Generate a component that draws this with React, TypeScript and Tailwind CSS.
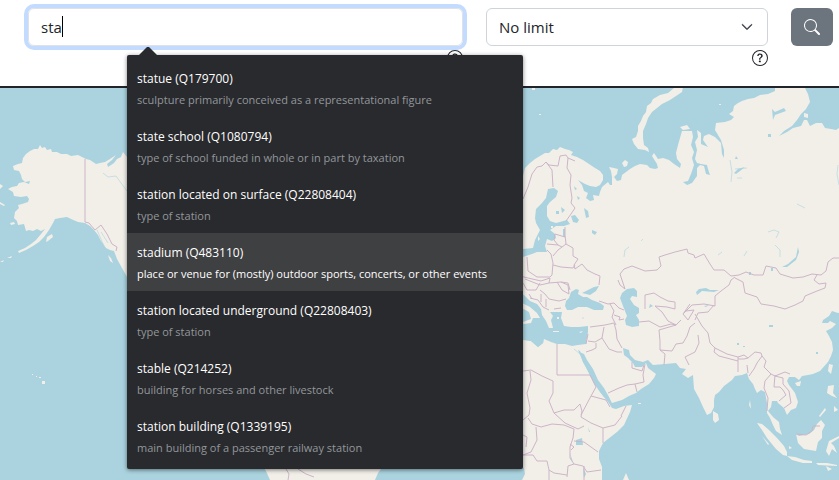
import { useState } from "react";
import { BsChevronDown, BsQuestionCircle, BsSearch } from "react-icons/bs";

type Suggestion = {
  label: string;
  id: string;
  description: string;
};

const suggestions: Suggestion[] = [
  {
    label: "statue",
    id: "Q179700",
    description: "sculpture primarily conceived as a representational figure",
  },
  {
    label: "state school",
    id: "Q1080794",
    description: "type of school funded in whole or in part by taxation",
  },
  {
    label: "station located on surface",
    id: "Q22808404",
    description: "type of station",
  },
  {
    label: "stadium",
    id: "Q483110",
    description:
      "place or venue for (mostly) outdoor sports, concerts, or other events",
  },
  {
    label: "station located underground",
    id: "Q22808403",
    description: "type of station",
  },
  {
    label: "stable",
    id: "Q214252",
    description: "building for horses and other livestock",
  },
  {
    label: "station building",
    id: "Q1339195",
    description: "main building of a passenger railway station",
  },
];

const land = [
  // Alaska and western Canada
  "M127 157L123 152L121 157L117 159L114 163L108 167L107 164L112 160L116 155L110 159L105 162L100 163L96 164L90 160L86 159L82 157L78 155L71 156L67 154L61 154L57 152L52 152L51 149L47 150L45 147L42 148L40 145L38 149L34 149L30 151L26 154L23 158L22 163L18 164L13 166L14 170L19 171L21 175L22 179L25 182L30 181L29 184L24 182L19 183L17 186L12 187L8 189L13 192L14 196L21 197L27 196L29 199L28 202L22 204L18 205L19 208L15 212L14 218L17 221L18 225L24 224L26 231L29 230L33 231L37 229L41 231L45 229L41 234L36 240L31 244L25 248L18 251L19 253L26 250L33 246L39 242L44 237L49 230L53 223L55 219L60 218L67 217L71 219L78 222L85 223L90 226L94 230L98 235L101 241L106 248L110 250L114 251L117 259L122 268L127 277L150 290L150 157Z",
  "M47 237L52 234L53 237L48 241L46 242Z M0 184L3 186L0 189Z M0 202L5 205L4 206L0 204Z M10 223L14 222L15 224L11 225Z M108 255L111 258L113 263L110 261Z M7 258L12 256L11 258Z M0 262L4 260L3 262Z",
  // Hawaii
  "M42 381h3v3h-3Z M36 376h1v1h-1Z M39 377h2v1h-2Z M32 374h1v1h-1Z",
  // South America
  "M262 465L266 471L270 480L375 480L378 473L384 465Z",
  // Novaya Zemlya and small Arctic islands
  "M683 87L674 88L668 93L660 95L653 99L651 103L647 106L646 112L643 116L641 121L638 126L638 131L636 137L632 139L634 144L638 149L645 150L649 152L648 148L644 145L643 138L643 131L646 124L648 118L652 112L657 108L662 104L670 100L676 96L682 92Z",
  "M622 163L625 160L628 162L627 166L624 167Z M532 88h3v2h-3Z M539 114h2v1h-2Z M680 127L687 125L690 129L683 130Z M719 104h2v1h-2Z M804 113L808 114L808 118L804 117Z",
  // Eurasia
  "M515 188L523 176L525 168L530 163L535 159L540 156L545 153L549 153L553 149L557 150L560 147L565 149L569 150L573 152L571 155L577 157L583 160L589 164L595 168L600 171L603 175L603 180L600 185L596 187L590 186L585 184L578 180L582 185L584 191L588 193L586 198L590 201L594 200L593 195L599 196L600 192L602 187L608 182L610 185L612 185L612 177L611 171L609 167L614 168L618 169L617 174L614 177L617 181L621 180L622 175L626 172L630 169L635 166L640 164L647 165L650 168L655 169L658 168L657 164L652 156L654 153L658 159L663 158L669 160L674 164L680 168L681 164L677 159L676 153L678 145L680 138L682 131L692 131L693 137L691 145L694 152L692 158L694 165L691 174L688 181L683 182L687 185L692 183L697 176L697 168L700 165L704 166L706 174L710 175L708 169L707 165L701 164L697 163L695 159L697 150L695 142L698 137L697 130L701 133L701 144L708 147L703 140L704 136L709 134L715 137L721 143L722 154L724 158L724 150L721 140L718 135L715 130L716 123L725 122L731 120L734 117L729 114L733 111L734 106L738 103L742 101L748 99L754 98L760 95L768 94L775 91L775 82L800 82L805 88L808 94L810 102L806 109L801 114L797 120L792 126L784 131L779 136L787 132L793 128L801 126L804 120L807 120L810 126L816 123L822 123L825 128L831 129L836 130L845 124L845 312L838 313L832 311L829 316L823 320L822 323L828 323L830 321L836 324L832 328L826 331L829 336L832 342L833 350L831 356L828 362L820 371L813 374L808 375L802 376L799 380L795 377L789 377L787 381L789 385L795 393L798 402L796 408L791 410L787 415L784 408L778 403L777 401L772 401L771 407L768 411L773 417L779 422L780 429L782 435L776 431L773 425L770 418L767 413L767 403L765 392L761 390L757 393L755 389L753 384L749 379L747 373L742 375L735 376L732 380L724 386L719 392L715 395L714 400L714 407L711 413L707 415L703 407L699 398L694 389L693 375L688 378L682 374L686 369L680 368L676 363L665 364L653 365L648 360L643 362L635 360L630 355L629 350L623 348L624 355L628 358L633 363L635 367L642 367L646 363L648 368L656 374L654 378L649 384L641 389L636 393L629 396L622 400L612 403L609 397L604 388L598 380L593 369L587 360L584 354L575 350L566 346L515 335Z",
  // Africa
  "M515 338L523 340L531 341L538 347L543 343L544 339L551 342L557 344L565 344L572 346L578 345L584 346L585 350L580 352L583 362L590 373L594 383L600 392L607 400L612 408L616 409L624 406L632 405L630 412L624 425L617 432L608 439L603 443L599 451L599 459L602 467L602 480L522 480L525 474L524 468L515 462Z",
  // South and east Asian islands
  "M713 411L718 414L719 420L715 423L713 420Z M757 423L762 424L769 430L777 438L784 446L787 452L787 456L783 455L776 449L767 438L762 430Z M787 456L795 457L804 460L812 461L812 463L803 463L792 460Z M796 434L799 436L809 434L814 430L817 424L821 420L825 425L822 431L822 438L818 442L816 451L804 449L798 443Z M829 364L833 365L831 374L828 371Z M795 383L801 381L800 386L797 386Z M828 386L834 385L833 393L837 398L832 396L827 393Z M829 441L839 436L839 438L831 443L834 446L837 453L832 449L829 456L826 451Z M834 406L838 410L834 412Z M825 408L819 416L820 417L826 410Z M816 463L827 463L837 465L837 466L818 465Z M789 446L792 448L789 449Z M750 400L751 409L749 405Z M762 436L769 444L768 445Z M826 466L832 469L828 471Z",
  "M623 480L626 473L629 480Z M638 403h3v1h-3Z",
];

const water = [
  // Baltic Sea
  "M548 189L554 188L558 191L556 197L550 202L547 206L547 216L550 221L556 223L567 220L570 224L564 226L556 226L550 230L555 234L556 238L552 241L547 239L545 246L547 252L537 252L532 254L523 257L520 254L523 249L533 248L535 240L540 230L536 223L535 218L536 209L542 203L546 198Z",
  // Mediterranean and Adriatic
  "M515 291L524 295L530 301L537 304L541 309L542 315L546 321L549 328L553 328L551 320L553 316L550 312L557 312L562 312L561 318L564 326L571 327L579 327L588 326L588 332L586 344L578 345L572 346L565 344L557 344L551 342L544 339L543 343L538 347L531 341L515 338L515 319L524 324L531 323L533 318L540 318L537 313L530 307L522 303L515 299Z M520 307L529 312L531 319L523 322Z",
  // Black Sea, Caspian and Gulf
  "M565 306L566 301L569 298L571 292L576 289L579 290L578 294L583 297L587 297L592 300L600 303L604 306L603 310L594 310L587 307L578 307L572 310L567 310Z M582 293L588 290L594 287L599 286L596 291L590 295Z",
  "M622 293L627 289L634 288L637 291L637 297L632 296L630 299L634 305L639 308L639 313L636 315L639 320L639 326L632 327L626 325L625 320L627 316L623 306L620 298Z",
  "M578 350L580 351L584 361L589 370L598 382L606 396L610 404L603 396L594 383L583 362Z",
  // Lakes
  "M798 247L796 257L788 264L782 267L787 267L796 260L799 252Z M571 216L575 215L579 220L577 223L573 222Z M584 208L588 211L589 217L586 218Z M576 440L582 438L583 445L576 445Z M696 292L699 289L706 288L710 290L719 290L714 292L702 291L697 295Z M592 230L597 232L595 235L592 233Z M704 306L709 305L706 307Z M772 109L775 112L784 108L786 111L775 115L773 120Z M734 173L738 169L745 167L740 171L736 174Z M563 229h2v8h-2Z M769 325h4v2h-4Z M588 427L590 432L589 432Z M768 134h3v3h-3Z M736 156L738 159L735 159Z M749 272h2v3h-2Z M771 268h2v3h-2Z M583 467L586 474L584 478Z M570 453L573 462L571 459Z M650 304L653 306L649 308Z M737 343h2v2h-2Z M743 346h2v1h-2Z M816 352h2v2h-2Z",
  "M538 212h2v3h-2Z M561 207L565 210L562 213Z M556 211h3v3h-3Z M574 186L577 189L575 190Z M577 196L580 198L578 200Z",
];

// Thin, faint rivers and reservoirs
const rivers =
  "M103 173L108 177L116 176L121 183L127 191 M730 160L732 172L731 182 M735 169L747 168 M737 178L742 178 M768 232L774 230L779 232L776 238 M775 245L780 250L780 257 M797 204L805 208 M624 257L625 250L629 247 M641 241L643 239 M838 165L837 174L839 185 M744 256L747 251 M718 255L722 252 M582 318L584 318 M623 470L625 468 M101 232L108 243 M97 230L104 246 M574 349L580 354";

const borders = [
  "M85 159V222L89 223L95 230L101 225L107 234L112 244L117 247L116 251",
  // Scandinavia and Finland
  "M523 199L528 187L532 174L537 167L542 166L546 162L549 165L558 166L560 156L566 155L568 158L575 161 M546 162L552 170L553 187 M568 158L567 168L571 175L570 185L572 198L571 203L575 208L571 214L566 221",
  // Eastern Europe
  "M565 227L565 235L566 244L562 247L558 245L547 244 M558 245L554 240L555 234L565 237 M566 244L573 248L573 256L578 259L574 265L575 269L582 264L587 270L595 274L600 276L599 285 M547 250L551 254L553 263L552 275L550 277L537 277L528 271L527 257 M553 265L561 267L573 268L575 265 M553 256L558 250L562 247 M520 276L528 278L541 281L550 278L549 283L540 285L525 279 M540 283L536 290L527 290L523 283 M549 283L561 282L568 285L569 294L562 290L557 282 M540 290L545 294L549 299L559 301L566 299 M530 298L538 300L543 307L549 310 M541 294L541 302 M546 299L546 307 M554 309L561 308 M529 294L532 299 M561 282L568 283L570 290",
  // Russia, Kazakhstan, Mongolia, China
  "M618 280L620 285L625 289L620 274L624 269L632 266L645 271L657 270L661 266L659 257L665 255L675 252L687 249L688 253L694 255L695 258L704 254L710 264L714 270L724 270L731 276L739 275L746 272L754 275L763 275L766 266L776 268L780 274L793 278L803 277L812 274L821 275L826 271L828 262L833 258L839 258",
  "M735 278L743 282L745 293L757 297L761 304L774 306L785 309L795 305L803 301L805 296L817 291L825 288L826 283L819 284L814 280L817 275 M735 277L731 280L729 285L721 291L715 296L715 306L704 304L692 305L684 313 M714 305L708 312L698 313L695 320 M695 314L702 326L708 333L710 343 M645 309L645 295L654 293L660 297L668 301L675 302L675 309L667 307L655 306 M639 322L649 321L660 327L671 324L676 325 M655 306L662 312L668 321L676 325L681 320 M690 304L683 314L688 320L694 310L686 311 M695 323L690 327L687 336L683 343 M676 325L659 330L660 341L660 350L665 354L664 365 M660 350L672 351L676 344L683 343",
  "M698 335L699 343L695 352L685 357L689 365 M710 343L715 348L727 354L738 357L738 361L719 356L714 352L715 348 M738 357L744 355L748 358L744 359L738 359 M748 358L755 352L761 353L762 356L757 363L754 369L749 376 M738 361L738 372 M747 365L748 373 M762 356L766 361L764 367L771 374L775 376L785 372L790 374 M771 374L765 381L764 388L768 398L767 411 M775 375L774 387L780 387L783 390L786 395L779 401 M775 376L783 378L783 384L789 391L791 403L784 408 M796 434L806 435L812 431L813 426L820 426",
  // Caucasus and Middle East
  "M599 301L608 304L614 303L619 308L624 310 M610 304L614 311L612 317L616 325 M590 327L605 325L614 323L616 330L617 339L622 348 M614 315L620 317L619 320L624 319 M604 327L602 338L595 342L588 341 M602 338L609 349L617 352L622 352 M596 343L596 348L592 350L586 352 M588 334L586 344 M608 393L619 388L627 385L635 384L644 382L643 375L645 364 M635 384L637 392 M632 362L632 368L642 371L644 365",
  // Africa
  "M557 344V375H590 M523 371L531 370L542 376L553 381V393L549 401L554 413L564 410L574 410L580 404L582 411L581 417L591 423L603 428L615 425L622 416 M530 371L531 380L527 393L530 408L529 415L523 420 M590 375L596 387L591 396L606 400L610 407 M591 396L581 415 M554 413L565 423L578 429L584 426 M603 428L603 443 M621 416L626 406 M528 418L532 424L541 427L552 424L564 425L574 429L573 438L570 447L570 458L574 464L568 466L567 477 M574 441L584 442L598 452 M574 464L583 466L587 472L601 470 M523 455H533L537 461H547L549 470L554 473L567 475 M536 427L537 440L531 452L523 455 M549 470V480 M570 444L574 447L571 450 M584 466L584 480 M523 435L527 437L526 447",
  "M286 469L289 474L288 480 M298 469L306 474L314 477",
];

const WorldMap = () => (
  <svg
    viewBox="0 88 839 392"
    preserveAspectRatio="xMidYMid slice"
    role="img"
    aria-label="World map"
    className="block h-full w-full bg-[#aad3df]"
  >
    <g fill="#f2efe9">
      {land.map((d) => (
        <path key={d} d={d} />
      ))}
    </g>
    <g fill="#aad3df">
      {water.map((d) => (
        <path key={d} d={d} />
      ))}
    </g>
    <path d={rivers} fill="none" stroke="#aad3df" strokeOpacity="0.6" />
    <path
      d="M538 236L540 239L538 241Z M551 226h2v2h-2Z M579 332L583 331L581 333Z M553 331h6v1h-6Z M557 317h2v2h-2Z"
      fill="#f2efe9"
    />
    <g fill="none" stroke="#cdb5c8" strokeLinejoin="round">
      {borders.map((d) => (
        <path key={d} d={d} />
      ))}
    </g>
  </svg>
);

const HelpButton = ({ label }: { label: string }) => (
  <button type="button" aria-label={label} className="mt-1 block text-[#212529]">
    <BsQuestionCircle size={16} />
  </button>
);

type SuggestionListProps = {
  active: string;
  setActive: (id: string) => void;
};

const SuggestionList = ({ active, setActive }: SuggestionListProps) => (
  <div className="absolute top-[39px] left-[99px] z-10 w-[396px]">
    <svg width="18" height="8" className="ml-3 block" aria-hidden="true">
      <path d="M0 8L8 0H10L18 8Z" fill="#292a2d" />
    </svg>
    <div
      id="suggestions"
      role="listbox"
      aria-label="Suggestions"
      className="rounded-xs bg-[#292a2d] py-1 shadow-[0_1px_4px_rgba(0,0,0,0.5)]"
    >
      {suggestions.map((item) => (
        <button
          key={item.id}
          type="button"
          role="option"
          aria-selected={item.id === active}
          onMouseEnter={() => setActive(item.id)}
          className={`block h-[58px] w-full px-[10px] text-left font-medium whitespace-nowrap ${
            item.id === active
              ? "bg-[#3f4042] text-white"
              : "text-[#92979c]"
          }`}
        >
          <span className="block text-[12px] leading-[24px] text-white">
            {item.label} ({item.id})
          </span>
          <span className="block text-[11px] leading-[18px]">
            {item.description}
          </span>
        </button>
      ))}
    </div>
  </div>
);

const App = () => {
  const [query, setQuery] = useState("sta");
  const [active, setActive] = useState("Q483110");

  return (
    <div className="flex min-h-screen flex-col bg-white font-['Open_Sans','Noto_Sans',sans-serif] text-[#212529]">
      <form
        onSubmit={(e) => e.preventDefault()}
        className="grid h-[88px] grid-cols-[435fr_282fr_42px] gap-[23px] border-b-2 border-[#212529] pt-2 pr-[6px] pl-7"
      >
        <div className="relative flex flex-col items-end">
          <input
            type="text"
            aria-label="Search for a type"
            aria-controls="suggestions"
            autoComplete="off"
            value={query}
            onChange={(e) => setQuery(e.target.value)}
            className="h-[38px] w-full rounded-md border border-[#dee2e6] px-3 text-[15px] caret-transparent ring-4 ring-[#c2dbfe] outline-none"
          />
          <div
            aria-hidden="true"
            className="pointer-events-none absolute top-2 left-[13px] flex h-[22px] text-[15px]"
          >
            <span className="invisible whitespace-pre">{query}</span>
            <span className="h-[21px] w-px bg-black" />
          </div>
          <HelpButton label="Help for the search field" />
          <SuggestionList active={active} setActive={setActive} />
        </div>

        <div className="relative flex flex-col items-end">
          <select
            aria-label="Limit"
            className="h-[38px] w-full appearance-none rounded-md border border-[#ced4da] bg-white pr-9 pl-3 text-[15px]"
          >
            <option>No limit</option>
            <option>10</option>
            <option>100</option>
          </select>
          <BsChevronDown
            size={12}
            stroke="currentColor"
            strokeWidth={1}
            className="pointer-events-none absolute top-[13px] right-[15px] text-[#343a40]"
          />
          <HelpButton label="Help for the limit" />
        </div>

        <button
          type="submit"
          aria-label="Search"
          className="flex h-[38px] items-center justify-center rounded-md bg-[#6c757d] text-white"
        >
          <BsSearch size={16} />
        </button>
      </form>
      <main className="relative min-h-[392px] flex-1">
        <div className="absolute inset-0">
          <WorldMap />
        </div>
      </main>
    </div>
  );
};

export default App;
